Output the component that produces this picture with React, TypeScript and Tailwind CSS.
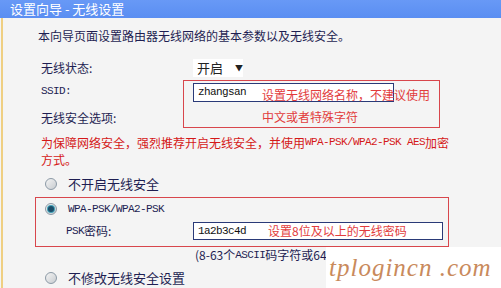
import React from 'react'

const cjk = { fontFamily: '"Noto Sans CJK SC", "Liberation Sans", sans-serif' }

function Mono({ children }: { children: React.ReactNode }) {
    return <span className="font-[family-name:Liberation_Mono,monospace] text-[11px] tracking-[-0.6px] leading-none">{children}</span>
}

function Radio({ checked = false }: { checked?: boolean }) {
    return (
        <span className="w-[12px] h-[12px] rounded-full border border-[#8c9aa6] bg-gradient-to-br from-[#f4f4f4] to-[#c8ccd0] flex items-center justify-center shrink-0">
            {checked && <span className="w-[6px] h-[6px] rounded-full bg-[#1d4e6a] ring-1 ring-[#3fa0b8]" />}
        </span>
    )
}

export default function App() {
    return (
        <div className="w-[501px] h-[288px] overflow-hidden bg-[#f4f4f4] relative text-[#1e1e52] text-[12px]" style={cjk}>
            <div className="h-[18px] leading-[17px] bg-gradient-to-b from-[#6899f6] to-[#5a8ef2] text-white text-[13px] pl-[10px]">
                设置向导 - 无线设置
            </div>

            <div className="ml-[1px] border-l-2 border-[#efcf82] h-[270px] pl-[35px] pt-[10px]">
                <p className="h-[16px] leading-[16px] whitespace-nowrap">本向导页面设置路由器无线网络的基本参数以及无线安全。</p>

                <div className="mt-[15px] flex h-[18px]">
                    <div className="w-[155px] pl-[3px] leading-[18px]">无线状态:</div>
                    <div className="w-[50px] h-[18px] bg-white flex items-center pl-[4px] gap-[12px] leading-[18px] text-[#222]">
                        <span className="text-[13px]">开启</span>
                        <span className="text-[8px]">▼</span>
                    </div>
                </div>

                <div className="mt-[3px] flex h-[48px]">
                    <div className="w-[145px] pl-[3px]">
                        <div className="mt-[3px] h-[16px] flex items-center"><Mono>SSID:</Mono></div>
                        <div className="mt-[11px] h-[16px] leading-[16px]">无线安全选项:</div>
                    </div>
                    <div className="w-[257px] h-[48px] border border-[#d8464c] relative">
                        <div className="ml-[9px] mt-[2px] w-[201px] h-[19px] bg-white border border-[#2a3a78] pl-[4px] flex items-center text-[#111]">
                            <Mono>zhangsan</Mono>
                        </div>
                        <span className="absolute left-[78px] top-[6px] leading-[16px] text-[#e23c3c] whitespace-nowrap">设置无线网络名称，不建议使用</span>
                        <span className="absolute left-[78px] top-[28px] leading-[16px] text-[#e23c3c] whitespace-nowrap">中文或者特殊字符</span>
                    </div>
                </div>

                <div className="mt-[6px] pl-[3px] text-[#d41818] whitespace-nowrap">
                    <div className="h-[17px] flex items-center">
                        为保障网络安全，强烈推荐开启无线安全，并使用<Mono>WPA-PSK/WPA2-PSK AES</Mono>加密
                    </div>
                    <div className="h-[17px] leading-[17px]">方式。</div>
                </div>

                <div className="mt-[8px] h-[16px] flex items-center pl-[7px] gap-[11px] text-[13px]">
                    <Radio />
                    <span>不开启无线安全</span>
                </div>

                <div className="mt-[5px] ml-[-3px] w-[414px] h-[50px] border border-[#d8464c] pl-[9px] pt-[3px]">
                    <div className="h-[16px] flex items-center gap-[11px]">
                        <Radio checked />
                        <Mono>WPA-PSK/WPA2-PSK</Mono>
                    </div>
                    <div className="mt-[5px] flex h-[18px]">
                        <div className="w-[148px] pl-[21px] flex items-center"><Mono>PSK</Mono>密码:</div>
                        <div className="w-[250px] h-[18px] bg-white border border-[#2a3a78] flex items-center pl-[4px] text-[#111]">
                            <Mono>1a2b3c4d</Mono>
                            <span className="ml-[22px] text-[#e23c3c] leading-[16px]">设置8位及以上的无线密码</span>
                        </div>
                    </div>
                </div>

                <div className="ml-[157px] h-[16px] flex items-center whitespace-nowrap">(8-63个<Mono>ASCII</Mono>码字符或64个十六进制字符)</div>

                <div className="mt-[7px] h-[16px] flex items-center pl-[7px] gap-[11px] text-[13px]">
                    <Radio />
                    <span>不修改无线安全设置</span>
                </div>
            </div>

            <div className="absolute left-[326px] top-[247px] w-[175px] h-[41px] bg-white flex items-center pl-[3px]">
                <span className="font-[family-name:Liberation_Serif,serif] italic text-[25px] tracking-[1px] text-[#c98a5c]">tplogincn .com</span>
            </div>
        </div>
    )
}
